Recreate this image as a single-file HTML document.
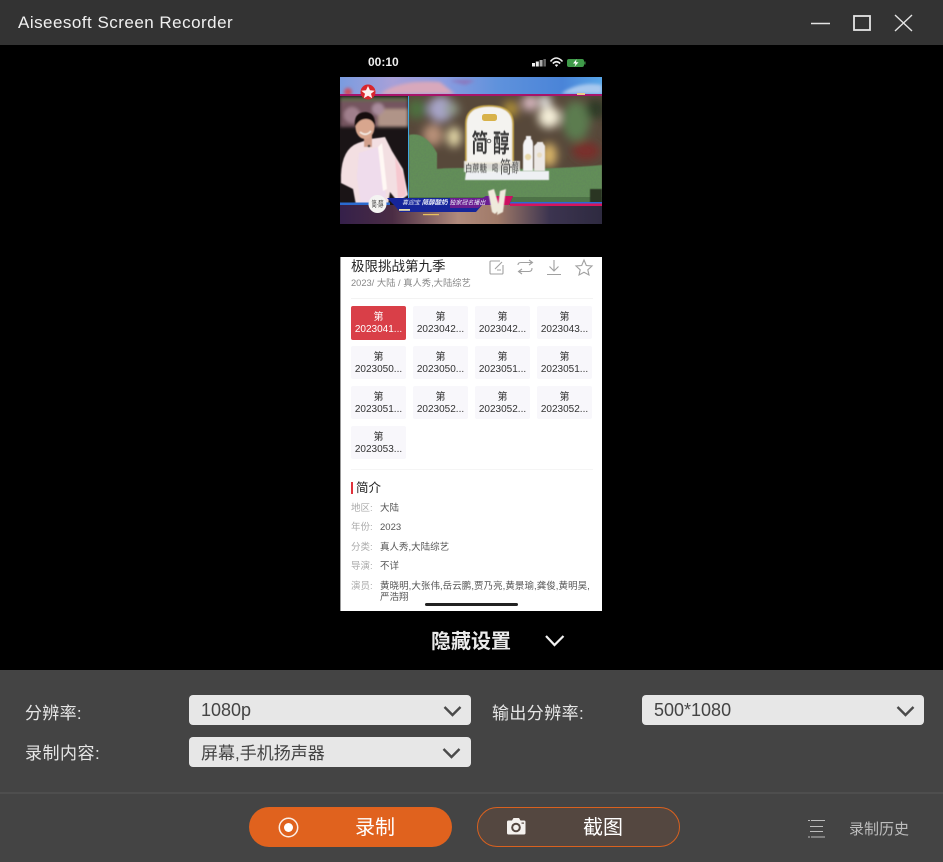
<!DOCTYPE html>
<html><head><meta charset="utf-8">
<style>
*{margin:0;padding:0;box-sizing:border-box}
html,body{width:943px;height:862px;overflow:hidden;background:#000;font-family:"Liberation Sans","Noto Sans CJK SC",sans-serif}
.a{position:absolute;white-space:nowrap}
#title{left:0;top:0;width:943px;height:45px;background:#333}
#panel{left:0;top:670px;width:943px;height:192px;background:#444}
.lab{color:#e6e6e6;font-size:17px;line-height:20px}
.sel{background:#e7e7e7;border-radius:4px;height:30px;color:#444;font-size:18px;line-height:31px;padding-left:12px}
.ep{position:absolute;width:55px;height:33px;background:#f8f7fb;border-radius:2px;text-align:center;font-size:10px;line-height:12px;color:#333;padding-top:5.5px;white-space:nowrap}
.ep.on{background:#d93f48;color:#fff;height:33.5px}
.k{position:absolute;left:10px;font-size:9.5px;color:#aaa;line-height:12px;white-space:nowrap}
.v{position:absolute;left:39px;font-size:9.5px;color:#555;line-height:12px;white-space:nowrap}
text{font-family:"Liberation Sans","Noto Sans CJK SC",sans-serif}
</style></head><body>
<div class="a" id="title"></div>
<div class="a" style="left:18px;top:12px;color:#f0f0f0;font-size:17px;line-height:22px;letter-spacing:.48px">Aiseesoft Screen Recorder</div>
<svg class="a" style="left:800px;top:0" width="143" height="45" fill="none" stroke="#e4e4e4">
<path d="M11 23.500H30" stroke-width="1.400"/>
<rect x="54" y="16" width="16" height="14" stroke-width="1.800"/>
<path d="M95 15L112 31M112 15L95 31" stroke-width="1.400"/>
</svg>

<div class="a" style="left:368px;top:55px;color:#eee;font-size:12px;line-height:14px;font-weight:bold">00:10</div>
<svg class="a" style="left:530px;top:55px" width="60" height="15">
<rect x="2" y="8" width="3" height="3.500" fill="#eee"/><rect x="5.800" y="6.500" width="3" height="5" fill="#eee"/><rect x="9.600" y="5" width="3" height="6.500" fill="#aaa"/><rect x="13.400" y="4" width="2.500" height="7.500" fill="#666"/>
<path d="M20.500 6.500Q26-.5 32.500 6.500M22.800 8.500Q26.500 5 30.200 8.500" fill="none" stroke="#eee" stroke-width="1.600"/><path d="M24.800 10Q26.500 8.800 28.200 10L26.500 12Z" fill="#eee"/>
<rect x="37" y="4" width="17" height="8" rx="2" fill="#3f9a49"/><rect x="54.200" y="6.500" width="1.300" height="3" fill="#3f9a49"/><path d="M46.500 4.300L43 8.500H45.500L44.500 11.700L48.500 7.300H46Z" fill="#fff"/>
</svg>

<svg class="a" style="left:340px;top:77px" width="262" height="147" viewBox="0 0 262 147">
<defs>
<filter id="b5" x="-30%" y="-30%" width="160%" height="160%"><feGaussianBlur stdDeviation="4.500"/></filter>
<filter id="b2" x="-20%" y="-20%" width="140%" height="140%"><feGaussianBlur stdDeviation="1.500"/></filter>
<filter id="b1" x="-10%" y="-10%" width="120%" height="120%"><feGaussianBlur stdDeviation=".45"/></filter>
<filter id="n" x="0" y="0" width="100%" height="100%"><feTurbulence type="fractalNoise" baseFrequency=".6" numOctaves="2" seed="3"/><feColorMatrix values="0 0 0 0 .12 0 0 0 0 .22 0 0 0 0 .12 0 0 0 2 -.85"/></filter>
<linearGradient id="sky" x1="0" x2="1"><stop offset="0" stop-color="#7a9ce0"/><stop offset=".2" stop-color="#a8a0d8"/><stop offset=".4" stop-color="#8a9ce0"/><stop offset=".6" stop-color="#5f92dc"/><stop offset=".85" stop-color="#4a84d8"/><stop offset="1" stop-color="#58a6e8"/></linearGradient>
<linearGradient id="low" x1="0" x2="1"><stop offset="0" stop-color="#35204a"/><stop offset=".2" stop-color="#4a2c44"/><stop offset=".45" stop-color="#b08a7c"/><stop offset=".6" stop-color="#a07a68"/><stop offset=".8" stop-color="#3c3450"/><stop offset="1" stop-color="#2e2a40"/></linearGradient>
<clipPath id="cr"><rect x="69" y="19" width="193" height="109"/></clipPath>
<clipPath id="cl"><rect x="0" y="19" width="68" height="109"/></clipPath>
<clipPath id="hedge"><path d="M69 58Q85 54 97 76V92Q110 90 160 92Q220 92 262 88V128H69Z"/></clipPath>
</defs>
<rect width="262" height="147" fill="#111"/>
<rect width="262" height="18" fill="url(#sky)"/>
<g filter="url(#b2)"><path d="M40 17Q60 2 100 5L115 17Z" fill="#d8a8bc"/><path d="M110 4Q125 1 135 4L125 8Z" fill="#8a7ac0"/><circle cx="8" cy="15" r="4" fill="#d05060"/><path d="M222 16Q240 4 262 8V17H222Z" fill="#a8c8ee"/></g>
<rect y="17" width="262" height="2" fill="#a8146a"/><rect y="19" width="262" height="1" fill="#1b3f9a"/>
<rect x="237" y="16" width="8" height="2" fill="#e9c98a"/>

<!-- left panel -->
<g clip-path="url(#cl)">
<rect y="19" width="68" height="109" fill="#1a1416"/>
<g filter="url(#b2)"><rect y="20" width="68" height="30" fill="#74555e"/><rect x="38" y="32" width="30" height="18" fill="#b09488"/><circle cx="12" cy="38" r="8" fill="#a07f8c"/><circle cx="38" cy="32" r="6" fill="#a98c9c"/><rect y="20" width="68" height="4" fill="#5e6a4a"/></g>
<g filter="url(#b1)">
<path d="M1 98Q2 72 18 66L30 62L45 60L52 74L63 92L68 118L58 125L50 115L48 128H16L13 112L1 106Z" fill="#f3dfe2"/>
<path d="M19 76Q28 73 38 70L46 118L40 128H21L17 100Z" fill="#efdcec"/>
<path d="M55 80L64 98L66 118L58 122Z" fill="#f6c8cf"/>
<path d="M38 70L42 66L47 112L43 114Z" fill="#fff8f4"/>
<rect x="24" y="56" width="8" height="14" fill="#d2a08c"/>
<ellipse cx="25" cy="50" rx="9.500" ry="12" fill="#d8a68e"/>
<path d="M15 50Q13 35 26 35Q36 36 35 50Q33 42 26 42Q19 42 15 50Z" fill="#14100e"/>
<path d="M20 55Q26 60 31 54" fill="none" stroke="#f4ece4" stroke-width="1.600"/>
<circle cx="29" cy="69" r="1.300" fill="#222"/>
</g>
</g>
<rect x="68" y="19" width="1.200" height="109" fill="#3fa6e0"/>

<!-- right panel -->
<g clip-path="url(#cr)">
<rect x="69" y="19" width="193" height="109" fill="#57483a"/>
<g filter="url(#b5)">
<circle cx="77" cy="32" r="10" fill="#4e7040"/>
<ellipse cx="101" cy="32" rx="13" ry="13" fill="#a7a4c8"/>
<ellipse cx="93" cy="58" rx="10" ry="11" fill="#b89078"/>
<ellipse cx="114" cy="60" rx="7" ry="10" fill="#e4d8a8"/>
<circle cx="112" cy="32" r="7" fill="#8f9a8a"/>
<circle cx="171" cy="32" r="8" fill="#ab8c38"/>
<circle cx="190" cy="26" r="8" fill="#d8b8c0"/>
<circle cx="209" cy="40" r="11" fill="#f4eed8"/>
<circle cx="205" cy="24" r="6" fill="#e8e8e8"/>
<ellipse cx="236" cy="44" rx="14" ry="20" fill="#5c7c50"/>
<ellipse cx="246" cy="74" rx="14" ry="9" fill="#7a2e2a"/>
<circle cx="256" cy="32" r="10" fill="#2e3a28"/>
<ellipse cx="209" cy="78" rx="8" ry="12" fill="#d8b468"/>
</g>
<path d="M69 58Q85 54 97 76V92Q110 90 160 92Q220 92 262 88V128H69Z" fill="#628e58" filter="url(#b1)"/>
<g clip-path="url(#hedge)"><rect x="69" y="58" width="193" height="70" filter="url(#n)" opacity=".55"/></g>
<rect x="69" y="120" width="193" height="8" fill="#2a4428" opacity=".35"/>
<rect x="250" y="112" width="12" height="16" fill="#2a3422" filter="url(#b1)"/>
<!-- board -->
<path d="M126 86V47Q126 29 149 29Q173 29 173 47V86Z" fill="#f4f3f0" stroke="#c8a94a" stroke-width="1.800" filter="url(#b1)"/>
<path d="M126 94H209V103H125Z" fill="#eef0f3" filter="url(#b1)"/>
<rect x="124" y="84" width="56" height="11" fill="#f4f4f2" opacity=".85" filter="url(#b1)"/>
<rect x="142" y="37" width="15" height="7" rx="2.500" fill="#d8b24a"/>
<text transform="translate(131.500,75) scale(.66,1)" font-size="25" font-weight="bold" fill="#3a3a3a" filter="url(#b1)">简</text>
<circle cx="149" cy="64" r="1.800" fill="none" stroke="#666"/>
<text transform="translate(153,75) scale(.66,1)" font-size="25" font-weight="bold" fill="#3a3a3a" filter="url(#b1)">醇</text>
<text transform="translate(125,95) scale(.73,1)" font-size="10" fill="#444" filter="url(#b1)">白蔗糖</text>
<text transform="translate(152,95) scale(.6,1)" font-size="10" fill="#444" filter="url(#b1)">喝</text>
<text transform="translate(160,96) scale(.65,1)" font-size="17" fill="#444" filter="url(#b1)">简</text>
<circle cx="171" cy="90" r=".8" fill="#555"/>
<text transform="translate(172,95) scale(.55,1)" font-size="12.500" fill="#444" filter="url(#b1)">醇</text>
<g filter="url(#b1)">
<path d="M183 94V68Q184 63 186 62V59H191V62Q193 63 193 68V94Z" fill="#f4f3f4"/>
<path d="M194 94V69L197 66V65H203V66L205 69V94Z" fill="#ece8e6"/>
<circle cx="188" cy="80" r="3.200" fill="#e8d8a8"/><circle cx="199.500" cy="78" r="2.600" fill="#e8dcc0"/>
</g>
</g>

<!-- bottom band -->
<rect y="128" width="262" height="19" fill="url(#low)"/>
<rect x="0" y="125.500" width="50" height="2.500" fill="#2a6ad0"/>
<rect x="170" y="125" width="92" height="1.500" fill="#2a6ad8"/>
<rect x="170" y="126.500" width="92" height="2.500" fill="#d8145c"/>
<path d="M47 121H143L146 119H173L169 128H142L136 135H60L54 128Z" fill="#16259a"/>
<path d="M110 121H143L146 119H173L169 128H142L138 131H110Z" fill="#6a1d90"/>
<path d="M156 119H173L169 128H152Z" fill="#cc1060"/>
<rect x="59" y="132" width="11" height="1.800" fill="#e8e0b0"/>
<rect x="83" y="137" width="16" height="1.200" fill="#e8c060"/>
<text x="62" y="127.500" font-size="6" fill="#e8ecf8" font-style="italic">喜迎宝 <tspan font-weight="bold" font-size="6.500">简醇酸奶</tspan> 独家冠名播出</text>
<circle cx="37.500" cy="127" r="9" fill="#f4f4f2"/>
<text transform="translate(31.500,130) scale(.8,1.300)" font-size="6.500" fill="#444">简·醇</text>
<g filter="url(#b1)" fill="#efeadc">
<path d="M148 114L154 112L160 132L155 137L152 135Z"/><path d="M160 114L166 112L163 135L157 138Z"/>
</g>
<circle cx="28" cy="15" r="7.500" fill="#d8262c"/>
<path d="M28 9L30 13.300L34.700 13.800L31 16.800L32.200 21.300L28 18.800L23.800 21.300L25 16.800L21.300 13.800L26 13.300Z" fill="#fdf2f0"/>
</svg>

<!-- phone page -->
<div class="a" style="left:340px;top:257px;width:262px;height:354px;background:#fff;border-left:1px solid #999;overflow:hidden">
<div class="a" style="left:10px;top:1px;font-size:13.500px;line-height:17px;color:#222">极限挑战第九季</div>
<div class="a" style="left:10px;top:20px;font-size:9.300px;line-height:12px;color:#888">2023/ 大陆 / 真人秀,大陆综艺</div>
<svg class="a" style="left:145px;top:0" width="110" height="20" fill="none" stroke="#a0a0a0" stroke-width="1.100">
<path d="M14 4H5Q4 4 4 5V16Q4 17 5 17H16Q17 17 17 16V8M9 12L16 5M11 13H15"/>
<path d="M32 8Q32 5.500 35 5.500H46M43 3L46.500 5.500L43 8M46 11Q46 14.500 43 14.500H33M36 12L32.500 14.500L36 17"/>
<path d="M68 3V13M63.500 9.500L68 14L72.500 9.500M61 17.500H75"/>
<path d="M98 3L100.300 8.500L106 9L101.800 12.800L103 18L98 15.300L93 18L94.200 12.800L90 9L95.700 8.500Z"/>
</svg>
<div class="a" style="left:10px;top:41px;width:242px;height:1px;background:#f3f3f3"></div>
<div class="ep on" style="left:10px;top:49px">第<br>2023041...</div>
<div class="ep" style="left:72px;top:49px">第<br>2023042...</div>
<div class="ep" style="left:134px;top:49px">第<br>2023042...</div>
<div class="ep" style="left:196px;top:49px">第<br>2023043...</div>
<div class="ep" style="left:10px;top:89px">第<br>2023050...</div>
<div class="ep" style="left:72px;top:89px">第<br>2023050...</div>
<div class="ep" style="left:134px;top:89px">第<br>2023051...</div>
<div class="ep" style="left:196px;top:89px">第<br>2023051...</div>
<div class="ep" style="left:10px;top:129px">第<br>2023051...</div>
<div class="ep" style="left:72px;top:129px">第<br>2023052...</div>
<div class="ep" style="left:134px;top:129px">第<br>2023052...</div>
<div class="ep" style="left:196px;top:129px">第<br>2023052...</div>
<div class="ep" style="left:10px;top:169px">第<br>2023053...</div>
<div class="a" style="left:10px;top:212px;width:242px;height:1px;background:#f5f5f5"></div>
<div class="a" style="left:10px;top:225px;width:2px;height:12px;background:#e0323c"></div>
<div class="a" style="left:15px;top:223px;font-size:12.500px;line-height:16px;color:#222">简介</div>
<div class="k" style="top:246px">地区:</div><div class="v" style="top:246px">大陆</div>
<div class="k" style="top:265px">年份:</div><div class="v" style="top:265px">2023</div>
<div class="k" style="top:285px">分类:</div><div class="v" style="top:285px">真人秀,大陆综艺</div>
<div class="k" style="top:304px">导演:</div><div class="v" style="top:304px">不详</div>
<div class="k" style="top:324px">演员:</div><div class="v" style="top:324px;letter-spacing:.05px">黄晓明,大张伟,岳云鹏,贾乃亮,黄景瑜,龚俊,黄明昊,</div>
<div class="v" style="top:335px">严浩翔</div>
<div class="a" style="left:84px;top:346px;width:93px;height:3px;border-radius:2px;background:#222"></div>
</div>

<div class="a" style="left:431px;top:630px;color:#eaeaea;font-size:20px;line-height:24px;font-weight:bold">隐藏设置</div>
<svg class="a" style="left:544px;top:633px" width="22" height="16" fill="none" stroke="#f2f2f2" stroke-width="2.200"><path d="M2 3L10.500 12L19.500 3"/></svg>

<!-- bottom panel -->
<div class="a" id="panel"></div>
<div class="a" style="left:0;top:792px;width:943px;height:2px;background:#4e4e4e"></div>
<div class="a lab" style="left:25px;top:704px;letter-spacing:.3px">分辨率:</div>
<div class="a lab" style="left:25px;top:744px;letter-spacing:.5px">录制内容:</div>
<div class="a lab" style="left:492px;top:704px;letter-spacing:.4px">输出分辨率:</div>
<div class="a sel" style="left:189px;top:695px;width:282px">1080p</div>
<div class="a sel" style="left:189px;top:737px;width:282px;font-size:17px;line-height:33px">屏幕,手机扬声器</div>
<div class="a sel" style="left:642px;top:695px;width:282px">500*1080</div>
<svg class="a" style="left:441px;top:704px" width="22" height="14" fill="none" stroke="#4a4a4a" stroke-width="2.400"><path d="M3.500 3L11.500 11L19.500 3"/></svg>
<svg class="a" style="left:440px;top:746px" width="22" height="14" fill="none" stroke="#4a4a4a" stroke-width="2.400"><path d="M3.500 3L11.500 11L19.500 3"/></svg>
<svg class="a" style="left:894px;top:704px" width="22" height="14" fill="none" stroke="#4a4a4a" stroke-width="2.400"><path d="M3.500 3L11.500 11L19.500 3"/></svg>

<div class="a" style="left:249px;top:807px;width:203px;height:40px;border-radius:20px;background:#e0621e"></div>
<svg class="a" style="left:277px;top:816px" width="24" height="24"><circle cx="11.500" cy="11.500" r="9.200" fill="none" stroke="#fbeee6" stroke-width="1.500"/><circle cx="11.500" cy="11.500" r="4.500" fill="#fff"/></svg>
<div class="a" style="left:355px;top:816px;color:#fff;font-size:20px;line-height:25px">录制</div>

<div class="a" style="left:477px;top:807px;width:203px;height:40px;border-radius:20px;background:#544740;border:1.500px solid #d9611f"></div>
<svg class="a" style="left:506px;top:817px" width="22" height="20"><path d="M1 5Q1 3.500 2.500 3.500H6L7.500 1H13L14.500 3.500H18Q19.500 3.500 19.500 5V16Q19.500 17.500 18 17.500H2.500Q1 17.500 1 16Z" fill="#f4f1ee"/><circle cx="10" cy="10.500" r="4.800" fill="#544740"/><circle cx="10" cy="10.500" r="2.800" fill="#f4f1ee"/><rect x="15.500" y="5.500" width="2.500" height="1.200" fill="#544740"/></svg>
<div class="a" style="left:583px;top:816px;color:#fff;font-size:20px;line-height:25px">截图</div>

<svg class="a" style="left:807px;top:819px" width="20" height="20" stroke="#bdbdbd" stroke-width="1.100"><path d="M1 1.500H3M4 1.500H18M3 7.500H16M3 12.500H16M1 18H3M4 18H18"/></svg>
<div class="a" style="left:849px;top:820px;color:#bdbdbd;font-size:15px;line-height:20px">录制历史</div>
</body></html>
